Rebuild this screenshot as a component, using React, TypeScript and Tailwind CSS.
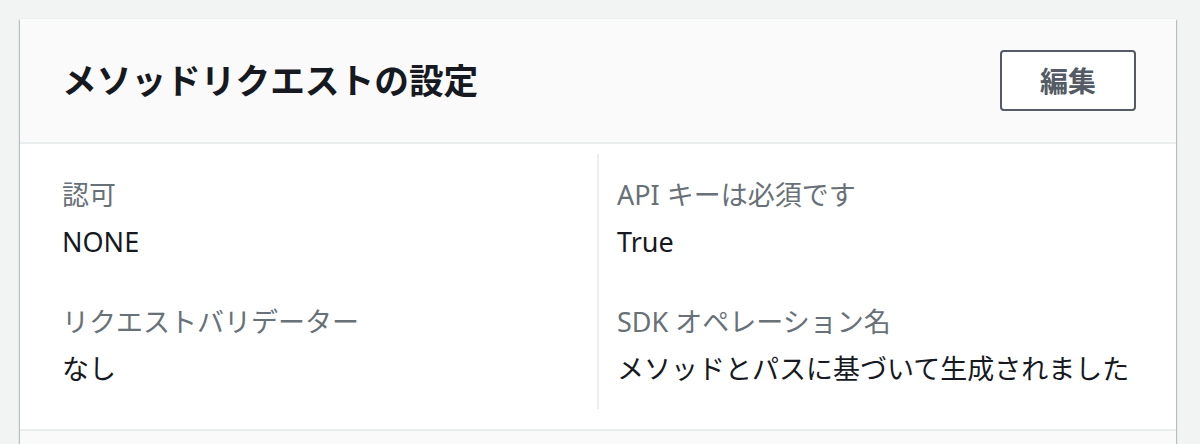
const FONT = "font-['Noto_Sans','Noto_Sans_CJK_JP',sans-serif]";

type Item = { label: string; value: string };

const LEFT: Item[] = [
  { label: "認可", value: "NONE" },
  { label: "リクエストバリデーター", value: "なし" },
];

const RIGHT: Item[] = [
  { label: "API キーは必須です", value: "True" },
  { label: "SDK オペレーション名", value: "メソッドとパスに基づいて生成されました" },
];

const Column = ({ items }: { items: Item[] }) => (
  <div className="flex flex-col gap-[44px]">
    {items.map((item) => (
      <div key={item.label}>
        <div className="text-[27px] leading-[36px] text-[#687078]">{item.label}</div>
        <div className="mt-[11px] text-[27px] leading-[36px] text-[#16191f]">{item.value}</div>
      </div>
    ))}
  </div>
);

export default function App() {
  return (
    <div className={`${FONT} h-[444px] overflow-hidden bg-[#f2f3f3] pt-[19px] pl-[20px]`}>
      <div className="w-[1156px] bg-white shadow-[0_1px_2px_rgba(0,28,36,0.3),1px_1px_1px_rgba(0,28,36,0.15),-1px_1px_1px_rgba(0,28,36,0.15)]">
        <div className="flex h-[125px] items-center justify-between border-b-2 border-[#eaeded] bg-[#fafafa] pl-[42px] pr-[40px]">
          <h2 className="text-[34.7px] font-bold leading-[44px] text-[#16191f]">メソッドリクエストの設定</h2>
          <button className="h-[61px] w-[136px] rounded-[4px] border-2 border-[#545b64] bg-white text-[28px] font-bold text-[#545b64]">
            編集
          </button>
        </div>
        <div className="grid grid-cols-[577px_1fr] pt-[10px] pb-[20px]">
          <div className="pl-[42px] pt-[23px] pb-[22px]">
            <Column items={LEFT} />
          </div>
          <div className="border-l-2 border-[#eaeded] pl-[18px] pt-[23px] pb-[22px]">
            <Column items={RIGHT} />
          </div>
        </div>
        <div className="h-[20px] border-t-2 border-[#eaeded] bg-[#fafafa]" />
      </div>
    </div>
  );
}
